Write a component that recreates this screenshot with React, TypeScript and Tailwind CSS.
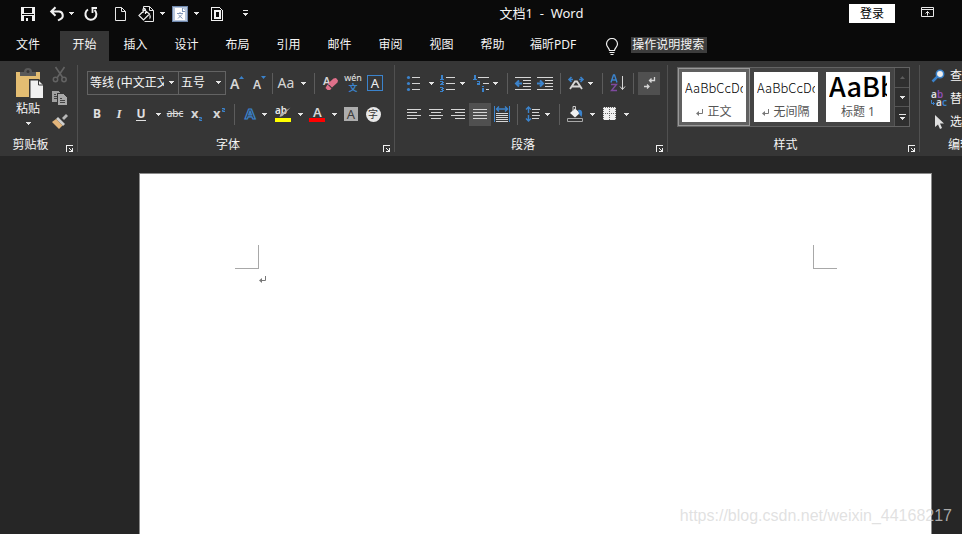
import type { ReactNode } from "react";
import { clsx } from "clsx";

const BLUE = "#3b83cc";
const LIGHT = "#d6d6d6";

/* ---------- shared pieces ---------- */

interface IconProps {
  children: ReactNode;
  size?: number;
  crisp?: boolean;
}

const Icon = ({ children, size = 16, crisp = false }: IconProps) => (
  <svg
    width={size}
    height={size}
    viewBox={`0 0 ${size} ${size}`}
    fill="none"
    shapeRendering={crisp ? "crispEdges" : "auto"}
    className="shrink-0 overflow-visible"
    aria-hidden="true"
  >
    {children}
  </svg>
);

const CaretShape = () => (
  <svg width="5" height="3" viewBox="0 0 5 3" shapeRendering="crispEdges" aria-hidden="true">
    <path d="M0 0h5v1H0zM1 1h3v1H1zM2 2h1v1H2z" fill="#e4e4e4" />
  </svg>
);

const Caret = ({ label, narrow = false }: { label: string; narrow?: boolean }) => (
  <button
    type="button"
    aria-label={label}
    className={clsx("flex h-6 shrink-0 items-center justify-center", narrow ? "w-[11px] pr-1" : "w-3")}
  >
    <CaretShape />
  </button>
);

interface ToolProps {
  label: string;
  children: ReactNode;
  active?: boolean;
}

const Tool = ({ label, children, active = false }: ToolProps) => (
  <button
    type="button"
    aria-label={label}
    aria-pressed={active}
    className={clsx(
      "flex h-[23px] w-[22px] shrink-0 items-center justify-center hover:bg-[#505050]",
      active && "bg-[#505050]",
    )}
  >
    {children}
  </button>
);

const Sep = ({ className = "mx-1" }: { className?: string }) => (
  <span className={clsx("h-[21px] w-px shrink-0 bg-[#5c5c5c]", className)} />
);

const Launcher = ({ label }: { label: string }) => (
  <button type="button" aria-label={label} className="flex h-5 w-4 items-end pb-0.5 pl-[5px]">
    <svg width="8" height="8" viewBox="0 0 8 8" shapeRendering="crispEdges">
      <path d="M0 0h7v1H1v6H0zM3 3h1v1H3zM4 4h1v1H4zM7 3v4H3V6h2V5h1V3z" fill="#f0f0f0" />
    </svg>
  </button>
);

interface GroupProps {
  title: string;
  children: ReactNode;
  className?: string;
}

const Group = ({ title, children, className }: GroupProps) => (
  <section aria-label={title} className="flex shrink-0">
    <div className="flex flex-col justify-between">
      <div className={className}>{children}</div>
      <div className="flex h-[22px] items-center">
        <h2 className="flex-1 text-center">{title}</h2>
        <Launcher label={`${title}设置`} />
      </div>
    </div>
    <span className="mt-1 mb-1 w-px bg-[#505050]" />
  </section>
);

/* ---------- title bar ---------- */

const TitleBar = () => (
  <header className="flex h-[31px] shrink-0 items-center bg-[#0a0a0a] pr-[27px] pb-1">
    <div className="flex items-center pl-5">
      <button type="button" aria-label="保存">
        <Icon crisp>
          <path d="M1 1h14v14H1z" fill="#f2f2f2" />
          <path d="M4 2h8v5H4zM4 10h8v5H4z" fill="#0a0a0a" />
          <path d="M2 8h12v1H2z" fill="#0a0a0a" />
          <path d="M6 12h2v3H6z" fill="#f2f2f2" />
        </Icon>
      </button>
      <button type="button" aria-label="撤消" className="ml-[13px]">
        <Icon>
          <path d="M2 5.500H10a4 4 0 0 1 1.500 7.600L9 14.500M6.500 1.200 2.200 5.500l4.300 4.300" stroke="#f2f2f2" strokeWidth="2" />
        </Icon>
      </button>
      <Caret label="撤消选项" />
      <button type="button" aria-label="重复" className="ml-1.5">
        <Icon>
          <path d="M5 3.500A5.500 5.500 0 1 0 11.500 4" stroke="#f2f2f2" strokeWidth="2" />
          <path d="M8.500 2h5.500M9.500 1.500V7" stroke="#f2f2f2" strokeWidth="1.800" />
        </Icon>
      </button>
      <button type="button" aria-label="新建" className="ml-[13px]">
        <Icon>
          <path d="M3.500 1.500h6l4 4v9h-10zM9.500 1.500v4h4" stroke="#e8e8e8" />
        </Icon>
      </button>
      <button type="button" aria-label="底纹" className="ml-2.5">
        <Icon>
          <path d="M5.500 3V.5h6l4 4v11H6.500M11.500.5v4h4" stroke="#e8e8e8" />
          <path d="M6.500 4 1 9.500 5.500 14l6-6zM5 7V3.500C5 2 7.500 2 7.500 4v4" stroke="#f2f2f2" strokeWidth="1.200" />
          <path d="M11.500 8c2 2 1.500 4 0 5.500V9z" fill="#f2f2f2" />
        </Icon>
      </button>
      <span className="w-0.5" />
      <Caret label="底纹选项" />
      <button type="button" aria-label="翻译" className="ml-1">
        <Icon crisp>
          <path d="M0 0h16v16H0z" fill="#6f88ad" />
          <path d="M1 1h14v14H1z" fill="#b7c6dc" />
          <path d="M3 2h7l3 3v9H3z" fill="#fff" />
          <path d="M10 2v3h3" stroke="#8096b8" />
          <path d="M5 7.500h6M8 6v2M6 12.500l4-4M6.500 9l4 3.500" stroke="#8096b8" shapeRendering="auto" />
        </Icon>
      </button>
      <span className="w-0.5" />
      <Caret label="翻译选项" />
      <button type="button" aria-label="页面" className="ml-[7px]">
        <Icon crisp>
          <path d="M2.500 1.500h8l3 3v10h-11z" stroke="#f2f2f2" />
          <path d="M6 5h5v7H6z" stroke="#f2f2f2" strokeWidth="2" />
        </Icon>
      </button>
      <button type="button" aria-label="自定义快速访问工具栏" className="ml-[17px] w-2">
        <svg width="7" height="7" viewBox="0 0 7 7" shapeRendering="crispEdges">
          <path d="M1 0h5v1H1zM1 3h5v1H1zM2 4h3v1H2zM3 5h1v1H3z" fill="#e4e4e4" />
        </svg>
      </button>
    </div>
    <h1 className="flex-1 pr-4 text-center text-[13px] whitespace-pre">文档1  -  Word</h1>
    <button type="button" className="h-[19px] bg-white px-[11px] leading-[19px] text-black">
      登录
    </button>
    <button type="button" aria-label="功能区显示选项" className="ml-[26px] pb-1">
      <svg width="14" height="12" viewBox="0 0 14 12" fill="none">
        <path d="M.5 1.500h12v9H.5zM.5 3.500h12M6.500 9.500v-4M4.500 7.500l2-2 2 2" stroke="#e8e8e8" />
      </svg>
    </button>
  </header>
);

/* ---------- tabs ---------- */

const TABS = ["开始", "插入", "设计", "布局", "引用", "邮件", "审阅", "视图", "帮助"];

const Tabs = () => (
  <nav className="flex h-[30px] shrink-0 items-stretch bg-[#0a0a0a] whitespace-nowrap">
    <button type="button" className="mr-1 w-14 pb-0.5">
      文件
    </button>
    <div className="flex gap-0.5">
      {TABS.map((tab, i) => (
        <button key={tab} type="button" className={clsx("w-[49px] pb-0.5", i === 0 && "bg-[#363636]")}>
          {tab}
        </button>
      ))}
      <button type="button" className="px-[11px] pb-0.5">
        福昕PDF
      </button>
    </div>
    <label className="ml-[18px] flex items-center gap-3 pb-0.5">
      <svg width="14" height="18" viewBox="0 0 14 18" fill="none" className="mt-1" aria-hidden="true">
        <path d="M4.500 12.500c0-2.500-3-3.500-3-6.500a5.500 5.500 0 0 1 11 0c0 3-3 4-3 6.500z" stroke="#f0f0f0" strokeWidth="1.200" />
        <path d="M4.500 14.500h5M5.500 16.500h3" stroke="#f0f0f0" />
      </svg>
      <input
        type="text"
        aria-label="搜索"
        defaultValue="操作说明搜索"
        className="h-4 w-[76px] bg-[#3d3d3d] pl-px outline-none"
      />
    </label>
  </nav>
);

/* ---------- clipboard ---------- */

const Clipboard = () => (
  <Group title="剪贴板" className="flex w-[77px] pt-1.5 pl-2.5">
    <div className="flex w-9 flex-col items-center">
      <button type="button" className="flex flex-col items-center">
        <svg width="30" height="32" viewBox="0 0 30 32" className="ml-1" aria-hidden="true">
          <path d="M1 5h24v25H1z" fill="#e3bd72" />
          <path d="M5 5h4a4 4 0 0 1 8 0h4v4H5z" fill="#595959" />
          <circle cx="13" cy="4.500" r="1.500" fill="#363636" />
          <path d="M14 12h10l5 5v15H14z" fill="#363636" />
          <path d="M15.500 13.500h8l4.500 4.500V31H15.500z" fill="#f0f0f0" />
          <path d="M23.500 13v5H28" stroke="#363636" fill="none" />
        </svg>
        <span className="pt-0.5 leading-4">粘贴</span>
      </button>
      <button type="button" aria-label="粘贴选项" className="flex h-3 items-center">
        <CaretShape />
      </button>
    </div>
    <div className="flex flex-col gap-[7px] pl-1.5">
      <button type="button" aria-label="剪切">
        <Icon>
          <path d="M3.500 0 11 11M12.500 0 5 11" stroke="#636363" strokeWidth="1.600" />
          <circle cx="3.500" cy="12.500" r="2.200" stroke="#636363" strokeWidth="1.500" />
          <circle cx="12" cy="12.500" r="2.200" stroke="#636363" strokeWidth="1.500" />
        </Icon>
      </button>
      <button type="button" aria-label="复制">
        <Icon crisp>
          <path d="M0 1h6l2 2v9H0z" fill="#a0a0a0" />
          <path d="M5 3h7l4 4v9H5z" fill="#363636" />
          <path d="M6 4h5l4 4v7H6z" fill="#a8a8a8" />
          <path d="M2 4.500h2M2 6.500h3M2 8.500h3M8 8.500h2M8 10.500h5M8 12.500h5" stroke="#444" />
        </Icon>
      </button>
      <button type="button" aria-label="格式刷">
        <Icon>
          <path d="m10 5 4-4 2 2-4 4z" fill="#b8b8b8" />
          <path d="m6 4 7 7-2 2-7-7z" fill="#cfcfcf" />
          <path d="m4 6 6.500 6.500L7 16 0 9z" fill="#e3b57a" />
        </Icon>
      </button>
    </div>
  </Group>
);

/* ---------- font ---------- */

interface ComboProps {
  label: string;
  options: string[];
  className: string;
}

const Combo = ({ label, options, className }: ComboProps) => (
  <div className={clsx("relative h-6", className)}>
    <select
      aria-label={label}
      className="h-6 w-full appearance-none border border-[#636363] bg-[#383838] pr-3.5 pl-0.5 text-xs outline-none"
    >
      {options.map((option) => (
        <option key={option}>{option}</option>
      ))}
    </select>
    <span className="pointer-events-none absolute top-2.5 right-[5px]">
      <CaretShape />
    </span>
  </div>
);

const FontGroup = () => (
  <Group title="字体" className="flex flex-col gap-[5px] pt-[9px] pr-2 pl-2">
    <div className="flex h-[26px] items-center">
      <Combo label="字体" options={["等线 (中文正文)", "宋体"]} className="ml-px w-[92px]" />
      <Combo label="字号" options={["五号", "小四"]} className="-ml-px w-12" />
      <Tool label="增大字号">
        <Icon>
          <text x="1" y="14" fontSize="14" fontWeight="600" fill={LIGHT}>A</text>
          <path d="M10 4h5l-2.500-3z" fill={BLUE} />
        </Icon>
      </Tool>
      <Tool label="减小字号">
        <Icon>
          <text x="2" y="14" fontSize="12" fontWeight="600" fill={LIGHT}>A</text>
          <path d="M10 1h5l-2.500 3z" fill={BLUE} />
        </Icon>
      </Tool>
      <Sep className="mx-0.5" />
      <Tool label="更改大小写">
        <span className="text-sm text-[#d6d6d6]">Aa</span>
      </Tool>
      <Caret label="更改大小写选项" />
      <Sep className="mx-[5px]" />
      <Tool label="清除所有格式">
        <Icon>
          <text x="0" y="10" fontSize="11" fontWeight="600" fill={LIGHT}>A</text>
          <path d="M10.500 3.500 13 3l2 2.500-.5 2L9 12.500 5 8.500z" fill="#e0708a" />
          <path d="m4.500 9.500 4 4-1.500 1.500H4.500L2.500 13z" fill="#e0708a" />
        </Icon>
      </Tool>
      <Tool label="拼音指南">
        <Icon>
          <text x="8" y="6" fontSize="9" textAnchor="middle" fill="#e8e8e8">wén</text>
          <text x="8" y="16" fontSize="9" fontWeight="700" textAnchor="middle" fill={BLUE}>文</text>
        </Icon>
      </Tool>
      <Tool label="字符边框">
        <span className="flex size-4 items-center justify-center border border-[#3b83cc] text-[13px] leading-[14px] text-[#f0f0f0]">
          A
        </span>
      </Tool>
    </div>
    <div className="flex h-[26px] items-center">
      <Tool label="加粗">
        <span className="font-bold text-[#e0e0e0]">B</span>
      </Tool>
      <Tool label="倾斜">
        <span className="font-['Liberation_Serif',serif] text-[13px] font-bold text-[#e0e0e0] italic">I</span>
      </Tool>
      <Tool label="下划线">
        <span className="border-b border-[#e0e0e0] leading-3 font-bold text-[#e0e0e0]">U</span>
      </Tool>
      <Caret label="下划线选项" />
      <Tool label="删除线">
        <span className="text-[10px] text-[#e0e0e0] line-through">abc</span>
      </Tool>
      <Tool label="下标">
        <Icon>
          <text x="2" y="12" fontSize="13" fontWeight="700" fill={LIGHT}>x</text>
          <path d="M10 11.500h2.500v1.500h-2v1.500H13" stroke={BLUE} />
        </Icon>
      </Tool>
      <Tool label="上标">
        <Icon>
          <text x="2" y="12" fontSize="13" fontWeight="700" fill={LIGHT}>x</text>
          <path d="M11 2.500h2.500V4h-2v1.500H14" stroke={BLUE} />
        </Icon>
      </Tool>
      <Sep />
      <Tool label="文本效果">
        <Icon>
          <text x="3" y="13" fontSize="15" fontWeight="700" stroke={BLUE} strokeWidth="1.200">A</text>
        </Icon>
      </Tool>
      <Caret label="文本效果选项" narrow />
      <Tool label="突出显示">
        <Icon>
          <text x="0" y="8" fontSize="10" fontWeight="600" fill="#e8e8e8">ab</text>
          <path d="m15.500 1.500-8 8.500-3 1 1-3z" fill="#b0b0b0" />
          <path d="M0 12h16v4H0z" fill="#ffff00" />
        </Icon>
      </Tool>
      <Caret label="突出显示颜色" />
      <Tool label="字体颜色">
        <Icon>
          <text x="4" y="11" fontSize="13" fontWeight="600" fill={LIGHT}>A</text>
          <path d="M0 12h16v4H0z" fill="#ff0000" />
        </Icon>
      </Tool>
      <Caret label="字体颜色选项" />
      <Tool label="字符底纹">
        <span className="flex size-3.5 items-center justify-center bg-[#adadad] text-[13px] leading-[14px] text-[#3c3c3c]">
          A
        </span>
      </Tool>
      <Tool label="带圈字符">
        <span className="flex size-[15px] items-center justify-center rounded-full bg-[#e8e8e8] text-[10px] leading-none text-[#333]">
          字
        </span>
      </Tool>
    </div>
  </Group>
);

/* ---------- paragraph ---------- */

const ALIGNMENTS = [
  { label: "左对齐", d: "M1 3.500h14M1 6.500h10M1 9.500h14M1 12.500h10" },
  { label: "居中", d: "M1 3.500h14M3 6.500h10M1 9.500h14M3 12.500h10" },
  { label: "右对齐", d: "M1 3.500h14M5 6.500h10M1 9.500h14M5 12.500h10" },
  { label: "两端对齐", d: "M1 3.500h14M1 6.500h14M1 9.500h14M1 12.500h14" },
];

const ParagraphGroup = () => (
  <Group title="段落" className="flex flex-col gap-[5px] pt-[9px] pr-[7px] pl-2">
    <div className="flex h-[26px] items-center">
      <Tool label="项目符号">
        <Icon>
          <path d="M6 2.500h8M6 8.500h8M6 14.500h8" stroke={LIGHT} />
          <circle cx="2.500" cy="2.500" r="1.600" fill={BLUE} />
          <circle cx="2.500" cy="8.500" r="1.600" fill={BLUE} />
          <circle cx="2.500" cy="14.500" r="1.600" fill={BLUE} />
        </Icon>
      </Tool>
      <Caret label="项目符号选项" />
      <Tool label="编号">
        <Icon crisp>
          <path d="M6 2h9v1H6zM6 8h9v1H6zM6 14h9v1H6z" fill={LIGHT} />
          <path
            d="M1 0h2v4h1v1H0V4h1V1zM0 6h3v1H0zM2 7h2v1H2zM1 8h2v1H1zM0 9h4v1H0zM0 12h3v1H0zM2 13h2v1H2zM1 14h2v1H1zM2 15h2v1H2zM0 16h3v1H0z"
            fill={BLUE}
          />
        </Icon>
      </Tool>
      <Caret label="编号选项" narrow />
      <Tool label="多级列表">
        <Icon crisp>
          <path d="M5 2h11v1H5zM10 8h6v1h-6zM13 14h3v1h-3z" fill={LIGHT} />
          <path
            d="M1 0h2v4h1v1H0V4h1V1zM4 6h3v4H4V8h2V7H4zM5 8h1v1H5zM9 11h2v1H9zM9 13h2v4H9z"
            fill={BLUE}
          />
        </Icon>
      </Tool>
      <Caret label="多级列表选项" narrow />
      <Sep />
      <Tool label="减少缩进量">
        <Icon>
          <path d="M0 2.500h16M8 5.500h8M8 8.500h8M8 11.500h8M0 14.500h16" stroke={LIGHT} />
          <path d="M7 8.500H2M4 5.500l-3 3 3 3" stroke={BLUE} strokeWidth="2" />
        </Icon>
      </Tool>
      <Tool label="增加缩进量">
        <Icon>
          <path d="M0 2.500h16M8 5.500h8M8 8.500h8M8 11.500h8M0 14.500h16" stroke={LIGHT} />
          <path d="M0 8.500h5M3 5.500l3 3-3 3" stroke={BLUE} strokeWidth="2" />
        </Icon>
      </Tool>
      <Sep />
      <Tool label="中文版式">
        <Icon>
          <path d="M5 4.500H1M3.500 2 1 4.500 3.500 7M11 4.500h4M12.500 2 15 4.500 12.500 7" stroke={BLUE} strokeWidth="1.600" />
          <path d="m2 14 5-7.500h2L14 14M4 11.500h8" stroke={LIGHT} strokeWidth="1.800" />
        </Icon>
      </Tool>
      <Caret label="中文版式选项" narrow />
      <Sep />
      <Tool label="排序">
        <Icon>
          <path d="M1 7.500 3.500 0h1L7 7.500M2 5h4" stroke={BLUE} strokeWidth="1.400" />
          <path d="M1 9.500h5.500L1.500 15.500H7" stroke="#7e4a9e" strokeWidth="1.400" />
          <path d="M12.500 1v13.500M10 11.500l2.500 3 2.500-3" stroke={LIGHT} />
        </Icon>
      </Tool>
      <Sep />
      <Tool label="显示编辑标记" active>
        <Icon>
          <path d="M13.500 2v3.500H9M10.500 3.500l-2 2 2 2M3 11.500h5M6 9.500l2 2-2 2" stroke={LIGHT} strokeWidth="1.300" />
        </Icon>
      </Tool>
    </div>
    <div className="flex h-[26px] items-center">
      {ALIGNMENTS.map((item, i) => (
        <Tool key={item.label} label={item.label} active={i === 3}>
          <Icon>
            <path d={item.d} stroke={LIGHT} />
          </Icon>
        </Tool>
      ))}
      <Tool label="分散对齐">
        <Icon>
          <path d="M.5 0v16M15.500 0v16" stroke={BLUE} />
          <path d="M3 3h10M5 .5 2.500 3 5 5.500M11 .5 13.500 3 11 5.500" stroke={BLUE} strokeWidth="1.400" />
          <path d="M2 7.500h12M2 9.500h12M2 11.500h12M2 13.500h12M2 15.500h12" stroke={LIGHT} />
        </Icon>
      </Tool>
      <Sep />
      <Tool label="行和段落间距">
        <Icon>
          <path d="M7 3.500h8M7 6.500h7M7 9.500h8M7 12.500h7" stroke={LIGHT} />
          <path d="M3.500 1v6M1 3.500 3.500 1 6 3.500M3.500 9v6M1 12.500 3.500 15 6 12.500" stroke={BLUE} strokeWidth="1.400" />
        </Icon>
      </Tool>
      <Caret label="间距选项" narrow />
      <Sep />
      <Tool label="底纹">
        <Icon>
          <path d="M.5 12.500h15v3H.5z" stroke="#a8a8a8" />
          <path d="M3 7 8 2.500l5 4.500-5 4.500z" fill="#f0f0f0" />
          <path d="M6 5V.5h2.500V3" stroke="#c8c8c8" />
          <path d="M11 4c4-1 5 2 3.500 7L12 8z" fill={BLUE} />
        </Icon>
      </Tool>
      <Caret label="底纹选项" />
      <Tool label="边框">
        <Icon crisp>
          <path d="M2 1h13v13H2z" fill="#f0f0f0" />
          <path d="M2 1.500h13M2 7.500h13M2.500 1v13M8.500 1v13M14.500 1v13" stroke="#666" strokeDasharray="1 1" />
        </Icon>
      </Tool>
      <Caret label="边框选项" />
    </div>
  </Group>
);

/* ---------- styles ---------- */

const STYLES = [
  { name: "正文", sample: "AaBbCcDd", mark: true },
  { name: "无间隔", sample: "AaBbCcDd", mark: true },
  { name: "标题 1", sample: "AaBb", heading: true },
];

const ReturnMark = () => (
  <svg width="7" height="7" viewBox="0 0 7 7" fill="none" aria-hidden="true">
    <path d="M6.500 0v4.500H1" stroke="#777" />
    <path d="M0 4.500 3 2v5z" fill="#777" />
  </svg>
);

const StylesGroup = () => (
  <Group title="样式" className="pt-1.5 pr-[9px] pl-[9px]">
    <div className="flex h-[60px] border border-[#636363] bg-[#444]">
      {STYLES.map((style, i) => (
        <button
          key={style.name}
          type="button"
          className={clsx("border p-[3px]", i === 0 ? "border-[#999] bg-[#606060]" : "border-transparent")}
        >
          <span className="flex h-[50px] w-16 flex-col justify-between bg-white px-[3px] text-black">
            <span
              className={clsx(
                "h-7 overflow-hidden text-left font-['Noto_Sans_CJK_SC',sans-serif]",
                style.heading ? "text-[27px] leading-7 font-medium" : "pt-1 text-[13px] leading-6 font-light",
              )}
            >
              {style.sample}
            </span>
            <span className="flex items-center justify-center gap-1 pb-0.5 leading-4 text-[#555]">
              {style.mark && <ReturnMark />}
              {style.name}
            </span>
          </span>
        </button>
      ))}
      <div className="flex w-[15px] flex-col divide-y divide-[#555] border-l border-[#555] bg-[#2f2f2f]">
        <button type="button" aria-label="上一行" className="flex flex-1 items-center justify-center">
          <svg width="5" height="3" viewBox="0 0 5 3">
            <path d="M0 3h5L2.500 0z" fill="#5c5c5c" />
          </svg>
        </button>
        <button type="button" aria-label="下一行" className="flex flex-1 items-center justify-center">
          <CaretShape />
        </button>
        <button type="button" aria-label="其他" className="flex flex-1 flex-col items-center justify-center gap-0.5">
          <span className="h-px w-[7px] bg-[#e4e4e4]" />
          <CaretShape />
        </button>
      </div>
    </div>
  </Group>
);

/* ---------- editing ---------- */

const EditingGroup = () => (
  <section aria-label="编辑" className="flex shrink-0 flex-col justify-between pt-[3px] pl-[11px]">
    <div className="flex flex-col">
      <button type="button" className="flex h-[23px] items-center gap-[3px]">
        <Icon>
          <path d="m1.500 13.500 5-5" stroke={BLUE} strokeWidth="2.500" />
          <circle cx="9" cy="6" r="3.700" fill="#f0f0f0" stroke={BLUE} strokeWidth="1.500" />
        </Icon>
        查找
      </button>
      <button type="button" className="flex h-[23px] items-center gap-[3px]">
        <Icon>
          <text x="0" y="7" fontSize="10" fontWeight="600" fill="#e0e0e0">a</text>
          <text x="6" y="7" fontSize="10" fontWeight="600" fill="#8e4eb5">b</text>
          <text x="5" y="15" fontSize="10" fontWeight="600" fill="#e0e0e0">a</text>
          <text x="11" y="15" fontSize="10" fontWeight="600" fill={BLUE}>c</text>
          <path d="M.5 9v3.500h3M2 11l1.500 1.500L2 14" stroke={BLUE} />
        </Icon>
        替换
      </button>
      <button type="button" className="flex h-[23px] items-center gap-[3px]">
        <Icon>
          <path d="M4 1v12l3-2.500 2 4.500 2-1-2-4.500h4z" fill="#e0e0e0" />
        </Icon>
        选择
      </button>
    </div>
    <h2 className="h-[22px] pl-[17px] leading-[22px]">编辑</h2>
  </section>
);

/* ---------- document ---------- */

const Page = () => (
  <main className="flex flex-1 flex-col bg-[#262626] pt-[17px] pr-[30px] pl-[139px]">
    <div className="flex-1 border border-b-0 border-[#8a8a8a] bg-white pt-[71px] pr-[94px] pl-[95px]">
      <div className="flex justify-between">
        <span className="size-6 border-r border-b border-[#a8a8a8]" />
        <span className="size-6 border-b border-l border-[#a8a8a8]" />
      </div>
      <div className="pt-[7px] pl-6">
        <ReturnMark />
      </div>
    </div>
  </main>
);

export default function App() {
  return (
    <div className="relative flex h-screen flex-col overflow-hidden bg-[#262626] font-['Noto_Sans','Noto_Sans_CJK_SC',sans-serif] text-xs text-[#f5f5f5]">
      <TitleBar />
      <Tabs />
      <div className="flex h-[95px] shrink-0 overflow-hidden bg-[#363636] whitespace-nowrap">
        <Clipboard />
        <FontGroup />
        <ParagraphGroup />
        <StylesGroup />
        <EditingGroup />
      </div>
      <Page />
      <p className="absolute right-2.5 bottom-1.5 font-['Liberation_Sans',sans-serif] text-base text-[#d7d7d7]/75">
        https://blog.csdn.net/weixin_44168217
      </p>
    </div>
  );
}
